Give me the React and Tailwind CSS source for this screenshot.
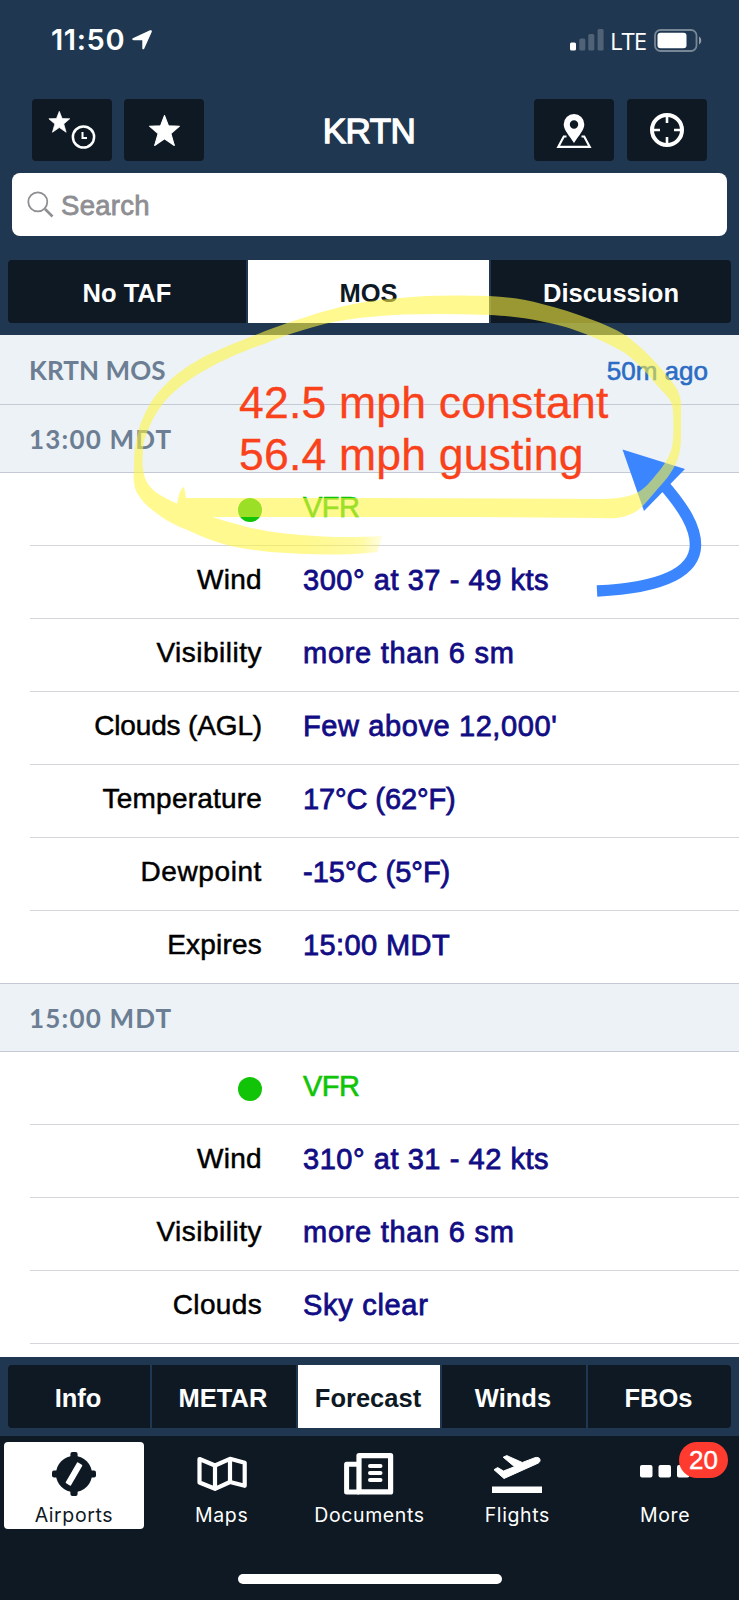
import React from 'react'

const segments = ['No TAF', 'MOS', 'Discussion']
const airportTabs = ['Info', 'METAR', 'Forecast', 'Winds', 'FBOs']

const forecasts = [
  {
    time: '13:00 MDT',
    rows: [
      { label: 'Wind', value: '300° at 37 - 49 kts', labelFit: 'tracking-[0.3px]', valueFit: 'tracking-[0.55px]' },
      { label: 'Visibility', value: 'more than 6 sm', labelFit: 'tracking-[0.5px]', valueFit: 'tracking-[0.72px]' },
      { label: 'Clouds (AGL)', value: "Few above 12,000'", labelFit: 'tracking-[-0.15px]', valueFit: 'tracking-[0.6px]' },
      { label: 'Temperature', value: '17°C (62°F)', labelFit: 'tracking-[0.2px]', valueFit: 'tracking-[-0.1px]' },
      { label: 'Dewpoint', value: '-15°C (5°F)', labelFit: 'tracking-[0.6px]', valueFit: 'tracking-[0px]' },
      { label: 'Expires', value: '15:00 MDT', labelFit: 'tracking-[0.2px]', valueFit: 'tracking-[0.4px]' },
    ],
  },
  {
    time: '15:00 MDT',
    rows: [
      { label: 'Wind', value: '310° at 31 - 42 kts', labelFit: 'tracking-[0.3px]', valueFit: 'tracking-[0.55px]' },
      { label: 'Visibility', value: 'more than 6 sm', labelFit: 'tracking-[0.5px]', valueFit: 'tracking-[0.72px]' },
      { label: 'Clouds', value: 'Sky clear', labelFit: 'tracking-[0.35px]', valueFit: 'tracking-[0.7px]' },
    ],
  },
]

const STAR = 'M15 .5L18.900 10.500L29.500 10.800L21.200 18L24.500 29.500L15 23L5.500 29.500L8.800 18L.5 10.800L11.100 10.500Z'

function RecentFavoritesIcon() {
  return (
    <svg width="48" height="40" viewBox="0 0 48 40" fill="none">
      <path d={STAR} fill="white" stroke="white" strokeLinejoin="round" transform="translate(.5 1) scale(.72)" />
      <circle cx="35.500" cy="27" r="10.600" stroke="white" strokeWidth="2.500" />
      <path d="M34.500 22v6h4.500" stroke="white" strokeWidth="2" />
    </svg>
  )
}

function StarIcon() {
  return (
    <svg className="mt-px" width="31" height="31" viewBox="0 0 30 30">
      <path d={STAR} fill="white" stroke="white" strokeLinejoin="round" />
    </svg>
  )
}

function MapPinIcon() {
  return (
    <svg className="mt-px" width="36" height="34" viewBox="0 0 36 34" fill="none">
      <path d="M10.500 22.500H7.800L2.300 32.800h31.400L28.200 22.500H25.500" stroke="white" strokeWidth="2.200" />
      <path
        fill="white"
        fillRule="evenodd"
        d="M18 0a10.3 10.3 0 0 1 10.3 10.3c0 5.700-5.300 11-10.300 18.700c-5-7.700-10.300-13-10.300-18.700A10.300 10.300 0 0 1 18 0Zm0 6.300a4.200 4.200 0 1 0 0 8.400a4.200 4.200 0 0 0 0-8.400Z"
      />
    </svg>
  )
}

function LocateIcon() {
  return (
    <svg width="34" height="34" viewBox="0 0 34 34" fill="none" stroke="white">
      <circle cx="17" cy="17" r="15" strokeWidth="4" />
      <path d="M17 3v7M17 24v7M3 17h7M24 17h7" strokeWidth="2.600" />
    </svg>
  )
}

function AirportsIcon() {
  return (
    <svg width="44" height="44" viewBox="0 0 44 44" fill="#0e1924">
      <circle cx="22" cy="22" r="18" />
      <rect x="18.400" y="0" width="7.200" height="44" rx="2" />
      <rect x="0" y="18.400" width="44" height="7.200" rx="2" />
      <rect x="18.900" y="10" width="6.200" height="24" rx="1" fill="white" transform="rotate(30 22 22)" />
    </svg>
  )
}

function MapsIcon() {
  return (
    <svg width="50" height="36" viewBox="0 0 50 36" fill="none" stroke="white" strokeWidth="4.200" strokeLinejoin="round">
      <path d="M2.500 3L18 9.500L33 2.800L47.700 6.800V29.800L33 26L18 32.800L2.500 26.500Z" />
      <path d="M18 9.500V33M33 3V26" />
    </svg>
  )
}

function DocumentsIcon() {
  return (
    <svg width="50" height="42" viewBox="0 0 50 42" fill="none" stroke="white">
      <path d="M15 11.300H2.600V39.100H15" strokeWidth="5" strokeLinejoin="round" />
      <path d="M15 2.700H46.600V38.900H15Z" strokeWidth="5.200" strokeLinejoin="round" />
      <path d="M26 13H36.500M26 20H36.500M26 27H36.500" strokeWidth="4" strokeLinecap="round" />
    </svg>
  )
}

function FlightsIcon() {
  return (
    <svg width="50" height="38" viewBox="0 0 50 38" fill="white">
      <path
        stroke="white"
        strokeWidth="1"
        strokeLinejoin="round"
        d="M2 14.700L5.700 12.600L11.500 16L22.500 11.700L11.200 2.200L14.800.6L30.300 7.500L43 2.700C45.500 2 47.500 2.500 48 4.500C48.400 6.300 47.300 7.500 46 8.200L12 23.500Z"
      />
      <rect y="31.500" width="50" height="6.500" />
    </svg>
  )
}

function MoreIcon() {
  return (
    <svg width="50" height="13" viewBox="0 0 50 13" fill="white">
      <rect width="12.500" height="12.500" rx="2" />
      <rect x="18.500" width="12.500" height="12.500" rx="2" />
      <rect x="37" width="12.500" height="12.500" rx="2" />
    </svg>
  )
}

const mainTabs = [
  { label: 'Airports', icon: AirportsIcon, active: true },
  { label: 'Maps', icon: MapsIcon },
  { label: 'Documents', icon: DocumentsIcon },
  { label: 'Flights', icon: FlightsIcon },
  { label: 'More', icon: MoreIcon, badge: 20 },
]

function StatusBar() {
  return (
    <div className="flex h-[99px] items-start justify-between pl-[51px] pr-[37px] pt-[22px]">
      <div className="flex h-9 items-center gap-[7px]">
        <span className="font-[Inter] text-[29px] font-semibold leading-9 tracking-[0.6px]">11:50</span>
        <svg width="20" height="20" viewBox="0 0 20 20" fill="white">
          <path d="M.8 8.200L18 .3C19.300-.2 20.200.6 19.700 1.900L12.300 18.500C11.700 19.800 10.300 19.500 10.300 18.200V10.200H1.600C.2 10.200-.3 8.800.8 8.200Z" />
        </svg>
      </div>
      <div className="flex h-9 items-center">
        <svg width="34" height="22" viewBox="0 0 34 22" fill="white">
          <rect y="13.500" width="6" height="8" rx="1.500" />
          <g opacity=".22">
            <rect x="9.300" y="9.500" width="6" height="12" rx="1.500" />
            <rect x="18.300" y="5" width="6" height="16.500" rx="1.500" />
            <rect x="27.600" y="0" width="6" height="21.500" rx="1.500" />
          </g>
        </svg>
        <span className="ml-[6px] mt-[2px] w-[37px] font-['Open_Sans'] text-[24px] font-medium tracking-[-1px]">LTE</span>
        <svg className="ml-[7px]" width="48" height="23" viewBox="0 0 48 23" fill="none">
          <rect x="1" y="1" width="41.500" height="21" rx="5.500" stroke="white" strokeOpacity=".4" strokeWidth="1.800" />
          <rect x="3.500" y="3.700" width="29" height="15.600" rx="3" fill="white" />
          <path d="M45 7.500c3 1.500 3 6.500 0 8z" fill="white" fillOpacity=".5" />
        </svg>
      </div>
    </div>
  )
}

function NavButton({ children }) {
  return (
    <button className="flex h-[62px] w-20 items-center justify-center rounded bg-[#0e1924]">
      {children}
    </button>
  )
}

function SectionHeader({ title, fit, children }) {
  return (
    <div className="flex items-center justify-between bg-[#edf2f6] pl-[29px] pr-[31px] pt-[2px]">
      <span className={`font-[Lato] text-[26px] font-bold text-[#6c7e93] ${fit}`}>{title}</span>
      {children}
    </div>
  )
}

function ForecastRow({ row, last }) {
  return (
    <div className={`flex h-[73px] border-b ${last ? 'border-[#c5c9d3]' : 'ml-[30px] border-[#d5d6d9]'}`}>
      <div
        className={`flex items-center justify-end pb-[5px] text-[28px] text-black [-webkit-text-stroke:0.5px_black] ${row.labelFit} ${
          last ? 'w-[262px]' : 'w-[232px]'
        }`}
      >
        {row.label}
      </div>
      <div className={`ml-[41px] flex items-center pb-[3px] text-[29px] text-[#120d84] [-webkit-text-stroke:0.8px_#120d84] ${row.valueFit}`}>
        {row.value}
      </div>
    </div>
  )
}

function FlightRulesRow() {
  return (
    <div className="ml-[30px] flex h-[73px] items-center border-b border-[#d5d6d9] pb-[3px]">
      <div className="ml-[208px] mt-1 size-6 rounded-full bg-[#12c408]" />
      <div className="ml-[41px] text-[29px] tracking-[-0.5px] text-[#12c408] [-webkit-text-stroke:0.6px_#12c408]">VFR</div>
    </div>
  )
}

// Hand-drawn markup: arrow first, highlighter stroke over it, note on top
function Annotation() {
  return (
    <div className="pointer-events-none absolute left-0 top-0 h-[640px] w-[739px]">
      <svg className="absolute inset-0" width="739" height="640" viewBox="0 0 739 640" fill="none">
        <defs>
          <linearGradient id="tail" gradientUnits="userSpaceOnUse" x1="300" x2="382" y1="0" y2="0">
            <stop offset="0" stopColor="#fff53e" />
            <stop offset=".75" stopColor="#fff53e" stopOpacity=".8" />
            <stop offset="1" stopColor="#fff53e" stopOpacity=".25" />
          </linearGradient>
        </defs>
        <path d="M597 591C660 588 695 573 695.500 545C695.500 527 684 508 663 484" stroke="#3b86ff" strokeWidth="11.500" />
        <path d="M622.500 449.500L685 469L644 511Z" fill="#3b86ff" />
        <g fill="#fff53e" opacity=".58">
          <path d="M300 535C276 533 257 530 240 525C220 520 207 515 190 509C178 504 168 500 160 495C148 488 142 477 142.500 460C143 445 144 438 148 430C152 420 157 411 165 401C175 390 185 382 200 373C217 363 232 356 250 349C270 342 280 337 300 331C325 323 345 319 370 317C410 313 450 314 490 315C510 316 525 318 540 321C555 324 567 327 580 332C597 338 611 345 625 353C637 362 646 372 655 383C664 394 672 398 673 410C673.500 425 674 437 672 447C670 456 664 466 655 476C648 485 641 492 632 495C622 498 610 499 600 499L369 498H186L184 487C180 488 176 502 177 513L200 517H369L480 517L600 518C615 519 625 518 637 511C646 504 652 495 662 484C671 474 676 465 679 455C681 447 681 440 681 430V405C681 392 674 384 668 377C655 361 642 347 625 335C613 328 602 323 590 319C574 313 559 308 542 304C525 299 508 297 489 296C455 295 425 295 400 298C388 299 380 300 370 301C345 305 320 312 300 319C280 325 266 331 250 337C230 345 215 351 200 359C188 366 177 373 167 383C159 391 154 397 150 404C144 415 139 425 138 434C134 448 134 457 134 471C133 480 134 487 137 493C142 501 148 507 155 512C162 518 171 523 180 527C193 532 206 539 220 543C236 548 253 550 270 552L300 553.700Z" />
          <path d="M300 535C325 537 350 538 382 536L378 552C350 555 325 555 300 553.700Z" fill="url(#tail)" />
        </g>
      </svg>
      <p className="absolute left-[239px] top-[377px] whitespace-nowrap text-[44.5px] leading-[52px] tracking-[0.2px] text-[#f9421b] [-webkit-text-stroke:0.3px_#f9421b]">
        42.5 mph constant
        <br />
        56.4 mph gusting
      </p>
    </div>
  )
}

export default function App() {
  return (
    <div className="relative flex h-[1600px] w-[739px] flex-col overflow-hidden bg-white font-['Liberation_Sans',Arial,sans-serif]">
      <header className="h-[335px] bg-[#1f3750] text-white">
        <StatusBar />
        <div className="flex items-center justify-between px-8">
          <div className="flex gap-3">
            <NavButton><RecentFavoritesIcon /></NavButton>
            <NavButton><StarIcon /></NavButton>
          </div>
          <h1 className="pt-[2px] text-[35px] tracking-[-0.5px] [-webkit-text-stroke:1.300px_white]">KRTN</h1>
          <div className="flex gap-[13px]">
            <NavButton><MapPinIcon /></NavButton>
            <NavButton><LocateIcon /></NavButton>
          </div>
        </div>
        <div className="mx-3 mt-3 flex h-[63px] items-center gap-[7px] rounded-lg bg-white pl-[15px] text-[#8e8e93]">
          <svg width="27" height="27" viewBox="0 0 27 27" fill="none" stroke="#8e8e93">
            <circle cx="10.800" cy="10.800" r="9.500" strokeWidth="1.800" />
            <path d="M18 18L25.500 25.500" strokeWidth="2.600" />
          </svg>
          <span className="pt-[2px] text-[27.5px] tracking-[0.3px] [-webkit-text-stroke:0.8px_#8e8e93]">Search</span>
        </div>
        <div className="mx-2 mt-6 grid h-[63px] grid-cols-[238px_241px_1fr] gap-[2px] overflow-hidden rounded">
          {segments.map((s) => (
            <div
              key={s}
              className={`flex items-center justify-center pt-1 text-[25.5px] font-bold ${
                s === 'MOS' ? 'bg-white text-[#0e1924]' : 'bg-[#0e1924] text-white'
              }`}
            >
              {s}
            </div>
          ))}
        </div>
      </header>

      <main className="h-[1022px] overflow-hidden">
        <div className="grid h-[70px] border-b border-[#c5c9d3]">
          <SectionHeader title="KRTN MOS" fit="tracking-[0.1px]">
            <span className="pt-px text-[26px] text-[#2b6cc4] [-webkit-text-stroke:0.6px_#2b6cc4]">50m ago</span>
          </SectionHeader>
        </div>
        {forecasts.map((f) => (
          <section key={f.time}>
            <div className="grid h-[68px] border-b border-[#c5c9d3]">
              <SectionHeader title={f.time} fit="tracking-[1.2px]" />
            </div>
            <FlightRulesRow />
            {f.rows.map((row) => (
              <ForecastRow key={row.label} row={row} last={row.label === 'Expires'} />
            ))}
          </section>
        ))}
      </main>

      <nav className="h-[79px] bg-[#1f3750] px-2 pt-2">
        <div className="grid h-[63px] grid-cols-[142px_144px_142px_144px_1fr] gap-[2px] overflow-hidden rounded">
          {airportTabs.map((t) => (
            <div
              key={t}
              className={`flex items-center justify-center pr-[2px] pt-[3px] text-[25.5px] font-bold ${
                t === 'Forecast' ? 'bg-white text-[#0e1924]' : 'bg-[#0e1924] text-white'
              }`}
            >
              {t}
            </div>
          ))}
        </div>
      </nav>

      <footer className="flex h-[164px] flex-col items-center bg-[#0e1924] pt-[6px]">
        <div className="grid w-full grid-cols-5">
          {mainTabs.map((tab) => (
            <div
              key={tab.label}
              className={`relative mx-1 flex h-[87px] flex-col items-center rounded ${
                tab.active ? 'bg-white text-[#0e1924]' : 'text-white'
              }`}
            >
              <div className={`flex items-center ${tab.badge ? 'h-[60px] pb-px' : 'h-[63px]'}`}>
                <tab.icon />
              </div>
              <span className={`font-[Inter] text-[19.5px] leading-5 tracking-[0.600px] ${tab.badge ? 'mt-[3px]' : ''}`}>{tab.label}</span>
              {tab.badge && (
                <span className="absolute right-[7px] top-0 flex h-9 w-[49px] items-center justify-center rounded-full bg-[#ff3b30] pt-px text-[26px] [-webkit-text-stroke:0.4px_white]">
                  {tab.badge}
                </span>
              )}
            </div>
          ))}
        </div>
        <div className="mt-[45px] h-[10px] w-[264px] rounded-full bg-white" />
      </footer>

      <Annotation />
    </div>
  )
}
